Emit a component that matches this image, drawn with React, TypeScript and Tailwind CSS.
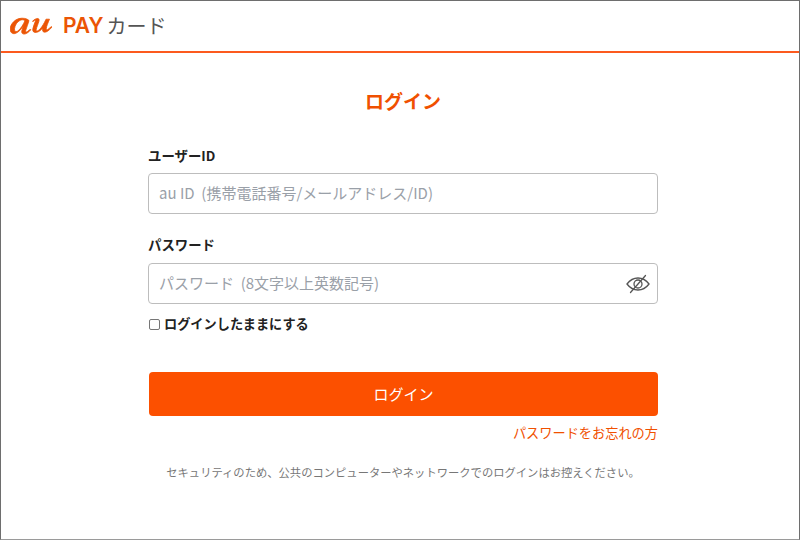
export default function App() {
  return (
    <div className="w-[800px] h-[540px] bg-white border border-[#6e6e6e] border-b-[#9a9a9a] flex flex-col overflow-hidden font-['Noto_Sans_CJK_JP','Noto_Sans',sans-serif] text-[#222]">
      <header className="h-[52px] shrink-0 border-b-2 border-[#fc5a1e] flex items-center pl-[9px] pb-[1px]">
        <svg width="44" height="18" viewBox="0 0 44 18" fill="#eb5505" stroke="#eb5505" strokeWidth="0.8" strokeLinejoin="round">
          <path d="M19 3.500C17 1.500 13 .6 9 1.600 4 3 .6 7.500.2 11.500c-.4 3.600 2 5.800 5 5 3.400-1 6-4.300 8.300-8-1 3-1.800 5.300-1.800 6.300 0 2.400 2.700 3 5.500 1.200 1.400-.9 2.600-2 3.600-3.200l-.7-.6c-1.400 1.500-3 2.800-3.800 2.800-.8 0-.9-.8-.5-2 .8-2.800 2.400-6 3.200-9.500L19 3.500zM15 3.600c-1.500 3.600-4.600 9-7.500 10.600-2 1-3.300 0-3-2.500.4-3.400 2.600-7 5.600-8.400 1.700-.8 3.700-.7 4.900.3z" />
          <path d="M22.500 4.300c2-2 4-3 5.300-2.800 1.300.2 1.500 1.200 1.100 2.800-.7 2.600-2.500 6.300-2.700 8.400-.1 1.200.5 1.500 1.500 1.100 2.900-1.300 6.300-7 8.300-11.600h3.500c-1.500 3.600-3.100 7-3.200 9.400-.1 1.300.6 1.400 1.500.9 1.100-.6 2.300-1.700 3.400-3l.7.6c-1.300 1.700-2.800 3.200-4.700 4.300-2.700 1.500-5 .8-4.600-2.200l.2-1.300c-1.700 2-3.800 3.900-6 4.400-2.700.6-4.500-.6-4-3.400.4-2.600 2-5.500 2.600-7.800.3-1-.3-1.200-1.100-.6l-1.300 1.100-.5-.3z" />
        </svg>
        <span className="ml-[9px] text-[#eb5505] font-semibold text-[21px] leading-none font-['Inter','Noto_Sans',sans-serif]">PAY</span>
        <span className="ml-[3px] text-[#555] text-[20px] leading-none">カード</span>
      </header>
      <main className="flex-1 w-[510px] ml-[147px] flex flex-col">
        <h1 className="mt-[35px] text-center text-[#f05000] font-bold text-[19px] leading-[26px]">ログイン</h1>
        <label className="mt-[32px] font-bold text-[13.4px] leading-[18px]">ユーザーID</label>
        <div className="mt-[9px] h-[41px] border border-[#bdbdbd] rounded-[4px] flex items-center pl-[10px] text-[15px] text-[#9aa0a8]">au ID&nbsp;&nbsp;(携帯電話番号/メールアドレス/ID)</div>
        <label className="mt-[21px] font-bold text-[13.4px] leading-[18px]">パスワード</label>
        <div className="mt-[10px] h-[41px] border border-[#bdbdbd] rounded-[4px] flex items-center justify-between pl-[10px] pr-[7px] text-[15px] text-[#9aa0a8]">
          <span>パスワード&nbsp;&nbsp;(8文字以上英数記号)</span>
          <svg className="mt-[1px]" width="24" height="20" viewBox="0 0 24 20" fill="none" stroke="#555" strokeWidth="1.300" strokeLinecap="round">
            <path d="M1 10c3-4 7-6 11-6s8 2 11 6c-3 4-7 6-11 6s-8-2-11-6z" />
            <circle cx="12" cy="10" r="4" />
            <path d="M4.500 18.500 19.500 1.500" />
          </svg>
        </div>
        <div className="mt-[11px] flex items-center h-[18px]">
          <span className="w-[11px] h-[11px] ml-[1px] border border-[#767676] rounded-[2px] bg-white" />
          <span className="ml-[4px] font-bold text-[13.2px] leading-[18px]">ログインしたままにする</span>
        </div>
        <button className="mt-[39px] h-[44px] ml-[1px] bg-[#fc5000] rounded-[4px] text-white text-[15px]">ログイン</button>
        <div className="mt-[8px] text-right text-[#f05000] text-[13.2px] leading-[18px]">パスワードをお忘れの方</div>
        <p className="mt-[22px] text-center text-[#777] text-[11.3px] leading-[16px]">セキュリティのため、公共のコンピューターやネットワークでのログインはお控えください。</p>
      </main>
    </div>
  );
}
